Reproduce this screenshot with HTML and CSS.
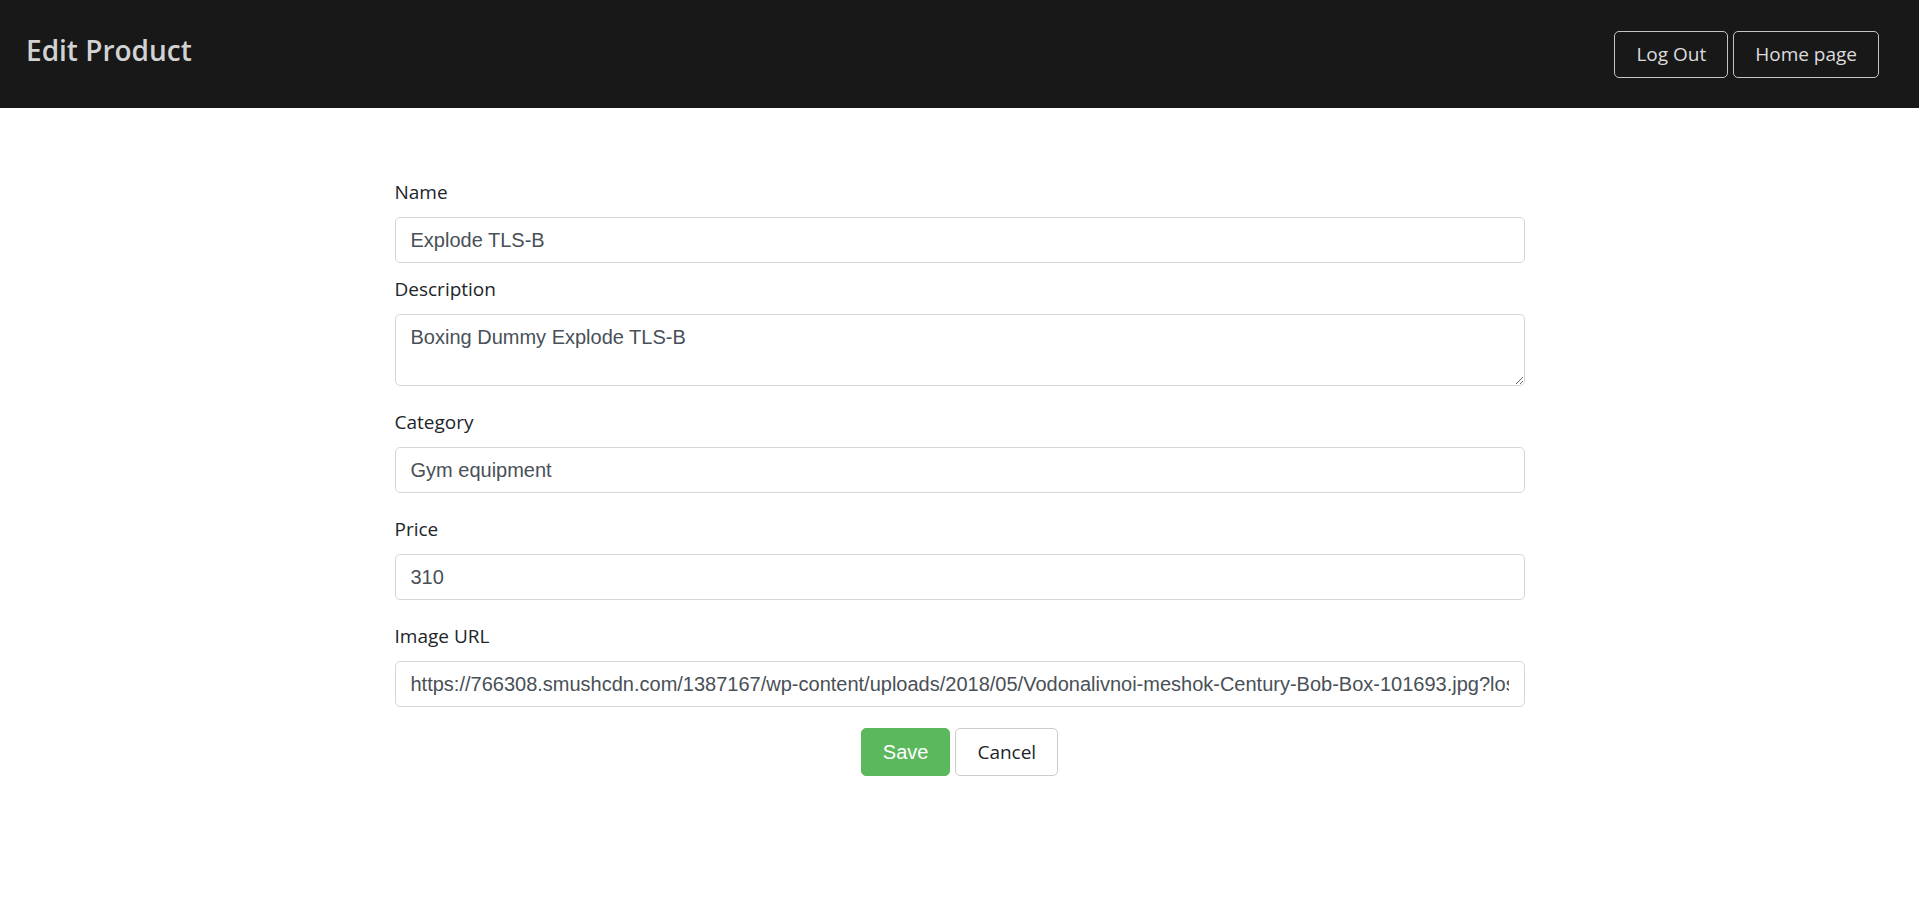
FILE: index.html
```html
<!DOCTYPE html>
<html lang="en">
<head>
<meta charset="utf-8">
<title>Edit Product</title>
<link rel="stylesheet" href="styles.css">
</head>
<body>
<header class="topbar">
  <h1 class="brand">Edit Product</h1>
  <nav class="top-actions">
    <button class="btn-outline" type="button">Log Out</button>
    <button class="btn-outline" type="button">Home page</button>
  </nav>
</header>
<main class="page">
  <form class="product-form">
    <div class="field field-tight">
      <label class="field-label" for="name">Name</label>
      <input class="field-input" id="name" type="text" value="Explode TLS-B">
    </div>
    <div class="field">
      <label class="field-label" for="desc">Description</label>
      <textarea class="field-input field-area" id="desc">Boxing Dummy Explode TLS-B</textarea>
    </div>
    <div class="field">
      <label class="field-label" for="cat">Category</label>
      <input class="field-input" id="cat" type="text" value="Gym equipment">
    </div>
    <div class="field">
      <label class="field-label" for="price">Price</label>
      <input class="field-input" id="price" type="text" value="310">
    </div>
    <div class="field">
      <label class="field-label" for="img">Image URL</label>
      <input class="field-input" id="img" type="text" value="https://766308.smushcdn.com/1387167/wp-content/uploads/2018/05/Vodonalivnoi-meshok-Century-Bob-Box-101693.jpg?lossy=1&amp;strip=1&amp;webp=1">
    </div>
    <div class="form-actions">
      <button class="btn-save" type="button">Save</button>
      <button class="btn-cancel" type="button">Cancel</button>
    </div>
  </form>
</main>
</body>
</html>
```
FILE: styles.css
```css
* { box-sizing: border-box; }
html, body {
  margin: 0;
  padding: 0;
  background: #ffffff;
  font-family: "Open Sans", "Noto Sans", sans-serif;
  color: #212529;
}
.topbar {
  height: 108px;
  background: #181818;
  display: flex;
  align-items: center;
  justify-content: space-between;
  padding: 0 40px 0 26px;
}
.brand {
  margin: 0 0 6px 0;
  font-size: 28px;
  font-weight: 600;
  color: #d2d2d2;
  line-height: 1.2;
}
.top-actions {
  display: flex;
  gap: 5px;
}
.btn-outline {
  height: 47px;
  padding: 0 21px;
  background: transparent;
  border: 1px solid #c4c4c4;
  border-radius: 5px;
  color: #dcdcdc;
  font-family: "Open Sans", "Noto Sans", sans-serif;
  font-size: 19px;
  line-height: 30px;
}
.page {
  padding-top: 69px;
}
.product-form {
  width: 1130px;
  margin: 0 auto;
}
.field {
  margin-bottom: 21px;
}
.field-tight {
  margin-bottom: 11px;
}
.field-label {
  display: block;
  font-size: 19px;
  line-height: 30px;
  margin-bottom: 10px;
  color: #212529;
}
.field-input {
  display: block;
  width: 100%;
  height: 46px;
  padding: 0 15px;
  border: 1px solid #d6d6d6;
  border-radius: 5px;
  font-family: "Liberation Sans", Arial, sans-serif;
  font-size: 20px;
  color: #495057;
  background: #fff;
  outline: none;
}
.field-area {
  height: 72px;
  padding: 7px 15px;
  line-height: 30px;
  resize: vertical;
}
.form-actions {
  display: flex;
  justify-content: center;
  gap: 5px;
}
.btn-save {
  height: 48px;
  padding: 0 21px;
  background: #5cb85c;
  border: 1px solid #5cb85c;
  border-radius: 5px;
  color: #ffffff;
  font-family: "Liberation Sans", Arial, sans-serif;
  font-size: 20px;
}
.btn-cancel {
  height: 48px;
  padding: 0 21px;
  background: #ffffff;
  border: 1px solid #cccccc;
  border-radius: 5px;
  color: #212529;
  font-family: "Open Sans", "Noto Sans", sans-serif;
  font-size: 19px;
}
```
